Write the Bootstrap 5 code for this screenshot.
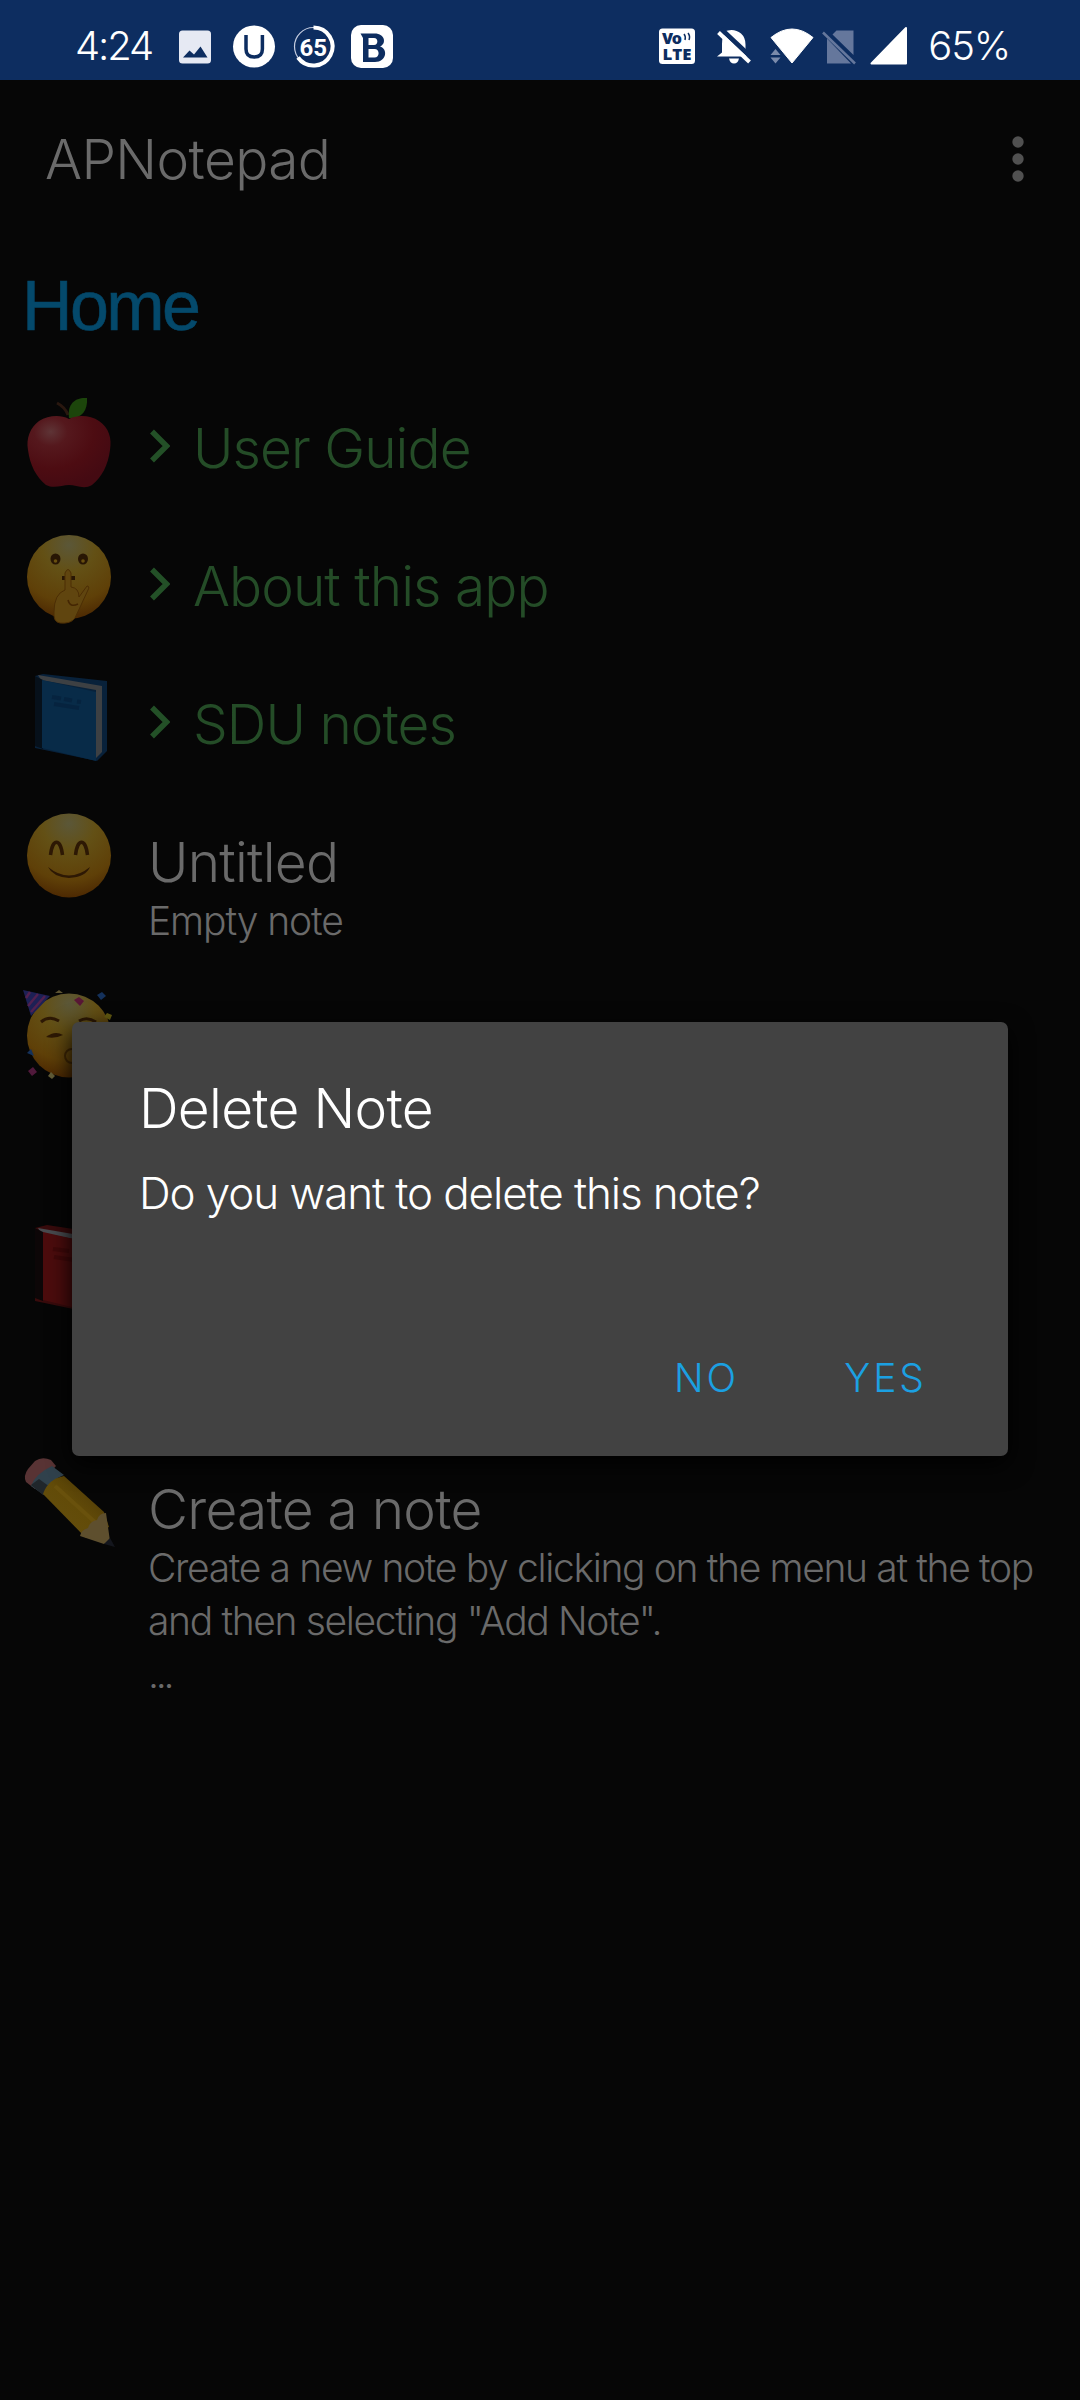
<!DOCTYPE html>
<html lang="en">
<head>
<meta charset="utf-8">
<meta name="viewport" content="width=device-width, initial-scale=1">
<title>APNotepad</title>
<link rel="stylesheet" href="https://cdn.jsdelivr.net/npm/bootstrap@5.3.0/dist/css/bootstrap.min.css">
<script src="https://cdn.jsdelivr.net/npm/bootstrap@5.3.0/dist/js/bootstrap.bundle.min.js"></script>
<style>
body{background:#060606;color:#6a6a6a;font-family:Inter,"Liberation Sans",sans-serif;font-weight:300;width:1080px;height:2400px;overflow:hidden}
svg{display:block;flex:none}
.statusbar{height:80px;background:#0d2d60;color:#fff;padding:12px 70px 0 75px;font-size:40px;line-height:50px}
.clock{letter-spacing:-2.1px;padding-top:9px}
.battery{letter-spacing:-1.2px;padding-top:9px}
.appbar{height:160px;padding:0 53px 2px 45px}
.apptitle{font-size:55px;line-height:60px;letter-spacing:-.6px}
.homehead{height:133px;padding:31px 0 0 22px;font-family:"Liberation Sans",sans-serif;font-size:70px;line-height:70px;font-weight:400;letter-spacing:-2.6px;color:#04496b;-webkit-text-stroke:.6px #04496b}
.note{height:138px;padding-left:20px}
.note.h2l{height:180px}.note.h3l{height:235px}.note.h4l{height:232px}
.notetext{padding:43px 0 0 28px;white-space:nowrap}
.ntitle{font-size:55px;line-height:64px;letter-spacing:-.75px}
.folder{color:#244c27}
.folder .ntitle{letter-spacing:-.95px}
.folder .chev{margin:13px 23px 0 1px}
.nbody{font-size:39px;line-height:53px;letter-spacing:-1.35px}
.nbody.one{letter-spacing:-1.1px}
.dots{letter-spacing:-3.2px}
.dlg{left:72px;top:1022px;width:936px;height:434px;background:#424242;border-radius:7px;color:#fff;padding:54px 81px 58px 67px;box-shadow:0 8px 24px #000}
.dtitle{font-size:55px;line-height:64px;letter-spacing:-.7px}
.dtext{font-size:44px;line-height:60px;letter-spacing:-1.1px;margin-top:23px;white-space:nowrap}
.actions{gap:105px}
.dbtn{color:#1ba0e2;font:300 39px/40px Inter,sans-serif;background:none;border:0;padding:0;letter-spacing:3px}
</style>
</head>
<body>
<svg width="0" height="0" class="position-absolute">
<defs>
<radialGradient id="gy" cx=".5" cy=".12" r=".9"><stop offset="0" stop-color="#5b5738"/><stop offset=".35" stop-color="#635015"/><stop offset=".75" stop-color="#5f4008"/><stop offset="1" stop-color="#4b2702"/></radialGradient>
<radialGradient id="gr" cx=".28" cy=".22" r=".8"><stop offset="0" stop-color="#5e3436"/><stop offset=".25" stop-color="#55181d"/><stop offset=".65" stop-color="#4d0c12"/><stop offset="1" stop-color="#440a12"/></radialGradient>
<linearGradient id="gp" x1="0" y1="1" x2="1" y2="0"><stop offset="0" stop-color="#665010"/><stop offset=".5" stop-color="#624b08"/><stop offset="1" stop-color="#443106"/></linearGradient>
</defs>
</svg>

<header class="statusbar d-flex justify-content-between">
  <div class="d-flex align-items-start">
    <span class="clock">4:24</span>
    <svg width="245" height="62" viewBox="152 12 245 62">
      <rect x="179" y="30.500" width="32" height="33" rx="3.500" fill="#e6e9f3"/>
      <path d="M183 57.500l6.500-7 4.500 4 6.500-8 7 11z" fill="#0d2d60"/>
      <circle cx="254" cy="46.500" r="21" fill="#fff"/>
      <path d="M246 35v14q0 8 8.200 8t8.200-8V35" fill="none" stroke="#0d2d60" stroke-width="3.500"/>
      <circle cx="313.500" cy="46.500" r="19" fill="none" stroke="#c5cde0" stroke-width="1.200"/>
      <path d="M313.500 27.500a19 19 0 1 1-15.500 30" fill="none" stroke="#fff" stroke-width="4"/>
      <text x="313.300" y="56" text-anchor="middle" font-family="Roboto,sans-serif" font-weight="700" font-size="24" fill="#fff">65</text>
      <rect x="351" y="25" width="42" height="43" rx="10" fill="#fff"/>
      <path fill-rule="evenodd" d="M360.500 33.500h14c11 0 12 10.500 5.500 13 8 2 7 15.500-5 15.500h-12V38zM368.500 38v7h5.500c4.500 0 4.500-7 0-7zM368.500 49v8.500h6c5.500 0 5.500-8.500 0-8.500z" fill="#0d2d60"/>
    </svg>
  </div>
  <div class="d-flex align-items-start">
    <svg width="275" height="62" viewBox="653 12 275 62">
      <rect x="659" y="28.500" width="36" height="35.500" rx="3.500" fill="#fff"/>
      <g fill="#0d2d60" font-family="Open Sans,sans-serif" font-weight="800"><text x="662" y="43.500" font-size="16" textLength="20">Vo</text><text x="662.500" y="60" font-size="16" textLength="29" lengthAdjust="spacingAndGlyphs">LTE</text></g>
      <path d="M684 34q2 2.500 1 6M688 33q2.500 3 1 7" fill="none" stroke="#0d2d60" stroke-width="1.500"/>
      <path d="M724 31.500q10-4 17 2 4.500 4 4.500 11v8l5 4H717l5-4V44q0-8 3-11z" fill="#fff"/>
      <path d="M729 58.500h10q-1 5-5 5t-5-5z" fill="#fff"/>
      <path d="M721 29l31 29" stroke="#0d2d60" stroke-width="5"/>
      <path d="M718.500 32.500l31 29.500" stroke="#fff" stroke-width="4"/>
      <path d="M771 37.500q21-17 42 0L792 63z" fill="#fff" stroke="#fff" stroke-linejoin="round"/>
      <path d="M770.500 55l5-6 5 6zM770.500 57.500l5 6 5-6z" fill="#7b8bab"/>
      <path d="M832.500 34.500l4-4H853.500V55zM827 38.500L851 63.500H827z" fill="#65779c"/>
      <path d="M823 32.500l32 31" stroke="#65779c" stroke-width="2.500"/>
      <path d="M871.500 63.500L906 28v35.500z" fill="#fff" stroke="#fff" stroke-width="2" stroke-linejoin="round"/>
    </svg>
    <span class="battery">65%</span>
  </div>
</header>

<nav class="appbar d-flex align-items-center justify-content-between">
  <div class="apptitle">APNotepad</div>
  <svg width="18" height="50" viewBox="0 0 18 50" fill="#505050"><circle cx="9" cy="8" r="5.700"/><circle cx="9" cy="25" r="5.700"/><circle cx="9" cy="42" r="5.700"/></svg>
</nav>
<div class="homehead">Home</div>

<main>
  <div class="note d-flex">
    <svg width="100" height="130" viewBox="20 373 100 130">
      <path d="M68 415q-3-8-11-12" fill="none" stroke="#29170f" stroke-width="3"/>
      <path d="M69 418c-2-15 7-21 18-20 1 13-6 21-18 20z" fill="#1c450b"/>
      <path d="M69 419c10-5 22-3 30 2 10 7 13 17 11 29-2 15-8 27-18 35-8 5-16 0-23 0s-15 4-23 0c-10-8-16-20-18-35-2-12 2-22 11-29 9-5 20-7 30-2z" fill="url(#gr)"/>
    </svg>
    <div class="notetext d-flex folder"><svg class="chev" width="21" height="34" viewBox="0 0 21 34"><path d="M3 2.500l14.500 14.500L3 31.500" fill="none" stroke="#235027" stroke-width="5.500"/></svg><div class="ntitle">User Guide</div></div>
  </div>
  <div class="note d-flex">
    <svg width="100" height="130" viewBox="20 511 100 130">
      <circle cx="69" cy="577" r="42" fill="url(#gy)"/>
      <ellipse cx="55.500" cy="559" rx="5" ry="5.500" fill="#281604"/><ellipse cx="83" cy="559" rx="5" ry="5.500" fill="#281604"/>
      <circle cx="55.500" cy="561" r="1.800" fill="#69500f"/><circle cx="83" cy="561" r="1.800" fill="#69500f"/>
      <path d="M62 578h13" stroke="#281604" stroke-width="4"/>
      <path d="M65 590v-17q3-7 6 0v14q8 1 8 10l8-11q3 0 1 4L75 618q-4 6-15 5-7-1-6-11 0-18 11-22z" fill="#60450f" stroke="#4c2e05" stroke-width="1"/>
      <path d="M68 600q2 8 10 4" fill="none" stroke="#442603" stroke-width="1.500"/>
    </svg>
    <div class="notetext d-flex folder"><svg class="chev" width="21" height="34" viewBox="0 0 21 34"><path d="M3 2.500l14.500 14.500L3 31.500" fill="none" stroke="#235027" stroke-width="5.500"/></svg><div class="ntitle">About this app</div></div>
  </div>
  <div class="note d-flex">
    <svg width="100" height="130" viewBox="20 649 100 130">
      <path d="M35 676l8-2 64 7v70l-10 10-62-13z" fill="#08213a"/>
      <path d="M38 675l64 11v66l-6 6V690l-55-10z" fill="#3d4043"/>
      <path d="M35 676l8 4v69l-8-3z" fill="#06101a"/>
      <path d="M42 680l54 12v69l-54-13z" fill="#082b48"/>
      <path d="M52 697l9 1.500m3 .5l8 1.500m5 1l4 .5M54 704l25 4" fill="none" stroke="#06223c" stroke-width="4" opacity=".75"/>
    </svg>
    <div class="notetext d-flex folder"><svg class="chev" width="21" height="34" viewBox="0 0 21 34"><path d="M3 2.500l14.500 14.500L3 31.500" fill="none" stroke="#235027" stroke-width="5.500"/></svg><div class="ntitle">SDU notes</div></div>
  </div>
  <div class="note h2l d-flex">
    <svg width="100" height="130" viewBox="20 787 100 130">
      <circle cx="69" cy="855.500" r="42" fill="url(#gy)"/>
      <path d="M50.500 855c2-17 10-17 12 0M75.500 855c2-17 10-17 12 0" fill="none" stroke="#2d1804" stroke-width="3.500"/>
      <path d="M48 867q21 17 42 0-4 10-21 11-16-1-21-11z" fill="#2d1804"/>
    </svg>
    <div class="notetext"><div class="ntitle">Untitled</div><div class="nbody one">Empty note</div></div>
  </div>
  <div class="note h3l d-flex">
    <svg width="100" height="130" viewBox="20 967 100 130">
      <circle cx="69" cy="1035.500" r="42" fill="url(#gy)"/>
      <path d="M23 990l27 6-19 20z" fill="#1d2055"/>
      <path d="M30 992l-4 6M38 994l-10 12M45 996l-14 16" stroke="#51204f" stroke-width="2.500"/>
      <path d="M41 1022q8-7 18-1M79 1021q8-5 17 1" fill="none" stroke="#2d1804" stroke-width="3"/>
      <path d="M46 1037q9-7 17-2-8 4-17 2z" fill="#2d1804"/>
      <circle cx="72" cy="1056" r="7" fill="none" stroke="#3f2604" stroke-width="2"/>
      <path d="M74 1000l5-3 5 4-4 5z" fill="#581735"/><path d="M97 995l5-3 4 4-5 4z" fill="#14315b"/><path d="M55 993l4-3 4 3z" fill="#5c5332"/><path d="M104 1017l3-4 5 2-2 5z" fill="#655b11"/>
      <path d="M27 1053l4-4 3 7z" fill="#14315b"/><path d="M28 1071l5-4 4 5-5 4z" fill="#50193b"/><path d="M48 1076l3-4 4 4-3 3z" fill="#625d38"/>
    </svg>
  </div>
  <div class="note h4l d-flex">
    <svg width="100" height="130" viewBox="20 1202 100 130">
      <path d="M35 1228l12-3 60 9v70l-10 10-62-13z" fill="#380b0c"/>
      <path d="M38 1228l64 11v66l-6 6v-68l-55-10z" fill="#484b4f"/>
      <path d="M35 1228l8 4v69l-8-3z" fill="#0c0607"/>
      <path d="M43 1232l53 12v69l-53-13z" fill="#4c0c0d"/>
      <path d="M53 1249l16 2M54 1257l20 3" stroke="#390708" stroke-width="4" opacity=".6"/>
    </svg>
  </div>
  <div class="note h3l d-flex">
    <svg width="100" height="130" viewBox="20 1434 100 130">
      <path d="M26 1482q-3-6 2-13l7-8q7-5 16-1l5 6-21 23z" fill="#583334"/>
      <path d="M31 1486q4-12 21-20l12 9q-12 4-20 20z" fill="#30414c"/>
      <path d="M31 1485l8-6 11 8-7 8z" fill="#20262b"/>
      <path d="M43 1494q5-15 21-18l40 36 5 15-23 11z" fill="url(#gp)"/>
      <path d="M55 1486l42 38" stroke="#69510c" stroke-width="4"/>
      <path d="M80 1536q1-6 8-8 2-7 9-8 2-7 9-7l4 28-6 3z" fill="#5e4f2e"/>
      <path d="M110 1538l5 9-11-3z" fill="#14161d"/>
    </svg>
    <div class="notetext"><div class="ntitle">Create a note</div><div class="nbody">Create a new note by clicking on the menu at the top<br>and then selecting "Add Note".<br><span class="dots">...</span></div></div>
  </div>
</main>

<section class="dlg position-absolute d-flex flex-column" role="dialog">
  <div class="dtitle">Delete Note</div>
  <div class="dtext">Do you want to delete this note?</div>
  <div class="actions d-flex justify-content-end mt-auto"><button class="dbtn">NO</button><button class="dbtn">YES</button></div>
</section>
</body>
</html>
